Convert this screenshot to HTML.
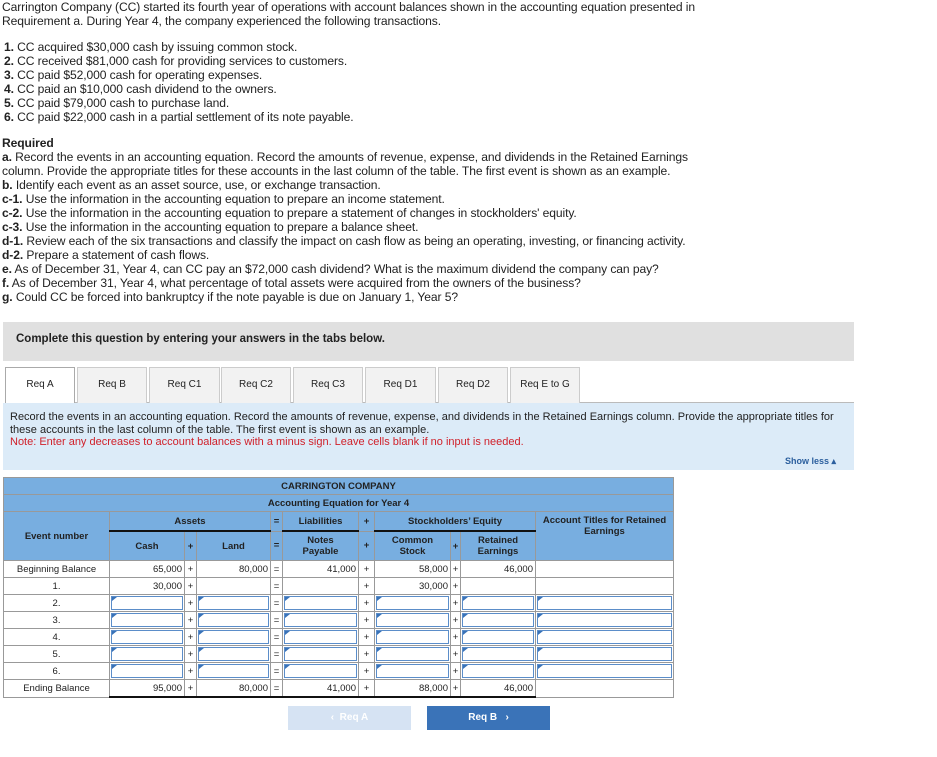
<!DOCTYPE html>
<html><head><meta charset="utf-8"><style>
body{margin:0;width:937px;height:757px;background:#fff;font-family:"Liberation Sans",Arial,sans-serif;color:#222;position:relative;overflow:hidden}
.t{position:absolute;left:2px;font-size:12.1px;line-height:14px;letter-spacing:-0.1px;white-space:nowrap}
b{font-weight:bold}
.gray{position:absolute;left:3px;top:322px;width:851px;height:39px;background:#e0e0e0;font-size:11.5px;font-weight:bold;}
.gray span{position:absolute;left:13px;top:11px}
.tab{position:absolute;top:367px;height:36px;background:#f2f2f2;border:1px solid #ccc;border-bottom:none;box-sizing:border-box;font-size:10px;text-align:center;line-height:34px}
.tabline{position:absolute;left:75px;top:402px;width:779px;height:1px;background:#bbb}
.blue{position:absolute;left:3px;top:403px;width:851px;height:67px;background:#dcebf8;font-size:11px;line-height:12.5px}
table{position:absolute;left:3px;top:477px;border-collapse:collapse;table-layout:fixed;font-size:9.5px}
td{border:1px solid #999;padding:0;text-align:center;height:16px;color:#222}
.h{background:#78aee0}
.r{text-align:right;padding-right:2px}
.in{border:1px solid #999;position:relative}
.in::after{content:"";position:absolute;left:1px;top:1px;right:1px;bottom:1px;border:1px solid #5b8dc9}
.in::before{content:"";position:absolute;left:2px;top:2px;border-left:5px solid #3a73b8;border-bottom:4px solid transparent}
.bb{border-bottom:2px solid #111}
.btn{position:absolute;top:706px;width:123px;height:24px;font-size:10px;font-weight:bold;color:#fff;text-align:center;line-height:24px}
</style></head><body>
<div class="t" style="top:0">Carrington Company (CC) started its fourth year of operations with account balances shown in the accounting equation presented in<br>Requirement a. During Year 4, the company experienced the following transactions.</div>
<div class="t" style="top:40px;left:4px"><b>1.</b> CC acquired $30,000 cash by issuing common stock.<br><b>2.</b> CC received $81,000 cash for providing services to customers.<br><b>3.</b> CC paid $52,000 cash for operating expenses.<br><b>4.</b> CC paid an $10,000 cash dividend to the owners.<br><b>5.</b> CC paid $79,000 cash to purchase land.<br><b>6.</b> CC paid $22,000 cash in a partial settlement of its note payable.</div>
<div class="t" style="top:136px"><b>Required</b><br><b>a.</b> Record the events in an accounting equation. Record the amounts of revenue, expense, and dividends in the Retained Earnings<br>column. Provide the appropriate titles for these accounts in the last column of the table. The first event is shown as an example.<br><b>b.</b> Identify each event as an asset source, use, or exchange transaction.<br><b>c-1.</b> Use the information in the accounting equation to prepare an income statement.<br><b>c-2.</b> Use the information in the accounting equation to prepare a statement of changes in stockholders' equity.<br><b>c-3.</b> Use the information in the accounting equation to prepare a balance sheet.<br><b>d-1.</b> Review each of the six transactions and classify the impact on cash flow as being an operating, investing, or financing activity.<br><b>d-2.</b> Prepare a statement of cash flows.<br><b>e.</b> As of December 31, Year 4, can CC pay an $72,000 cash dividend? What is the maximum dividend the company can pay?<br><b>f.</b> As of December 31, Year 4, what percentage of total assets were acquired from the owners of the business?<br><b>g.</b> Could CC be forced into bankruptcy if the note payable is due on January 1, Year 5?</div>
<div class="gray"><span>Complete this question by entering your answers in the tabs below.</span></div>
<div class="tabline"></div>
<div class="tab" style="left:5px;width:70px;background:#fff;border-color:#aaa">Req A</div>
<div class="tab" style="left:77px;width:70px">Req B</div>
<div class="tab" style="left:149px;width:71px">Req C1</div>
<div class="tab" style="left:221px;width:70px">Req C2</div>
<div class="tab" style="left:293px;width:70px">Req C3</div>
<div class="tab" style="left:365px;width:71px">Req D1</div>
<div class="tab" style="left:438px;width:70px">Req D2</div>
<div class="tab" style="left:510px;width:70px">Req E to G</div>
<div class="blue"><div style="position:absolute;left:7px;top:8px">Record the events in an accounting equation. Record the amounts of revenue, expense, and dividends in the Retained Earnings column. Provide the appropriate titles for<br>these accounts in the last column of the table. The first event is shown as an example.<br><span style="color:#d0202a">Note: Enter any decreases to account balances with a minus sign. Leave cells blank if no input is needed.</span></div>
<div style="position:absolute;right:18px;top:52px;font-size:9px;font-weight:bold;color:#2b5f9e">Show less ▴</div></div>
<table>
<colgroup><col style="width:106px"><col style="width:75px"><col style="width:12px"><col style="width:74px"><col style="width:12px"><col style="width:76px"><col style="width:16px"><col style="width:76px"><col style="width:10px"><col style="width:75px"><col style="width:138px"></colgroup>
<tr class="h"><td colspan="11" style="font-weight:bold">CARRINGTON COMPANY</td></tr>
<tr class="h"><td colspan="11" style="font-weight:bold">Accounting Equation for Year 4</td></tr>
<tr class="h" style="font-weight:bold"><td rowspan="2">Event number</td><td colspan="3" style="border-bottom:2px solid #111;height:18px">Assets</td><td>=</td><td style="border-bottom:2px solid #111">Liabilities</td><td>+</td><td colspan="3" style="border-bottom:2px solid #111">Stockholders’ Equity</td><td rowspan="2" style="vertical-align:top;padding-top:3px">Account Titles for Retained Earnings</td></tr>
<tr class="h" style="font-weight:bold"><td style="height:28px">Cash</td><td>+</td><td>Land</td><td>=</td><td>Notes<br>Payable</td><td>+</td><td>Common<br>Stock</td><td>+</td><td>Retained<br>Earnings</td></tr>
<tr><td>Beginning Balance</td><td class="r">65,000</td><td>+</td><td class="r">80,000</td><td>=</td><td class="r">41,000</td><td>+</td><td class="r">58,000</td><td>+</td><td class="r">46,000</td><td></td></tr>
<tr><td>1.</td><td class="r">30,000</td><td>+</td><td></td><td>=</td><td></td><td>+</td><td class="r">30,000</td><td>+</td><td></td><td></td></tr>
<tr><td>2.</td><td class="in"></td><td>+</td><td class="in"></td><td>=</td><td class="in"></td><td>+</td><td class="in"></td><td>+</td><td class="in"></td><td class="in"></td></tr>
<tr><td>3.</td><td class="in"></td><td>+</td><td class="in"></td><td>=</td><td class="in"></td><td>+</td><td class="in"></td><td>+</td><td class="in"></td><td class="in"></td></tr>
<tr><td>4.</td><td class="in"></td><td>+</td><td class="in"></td><td>=</td><td class="in"></td><td>+</td><td class="in"></td><td>+</td><td class="in"></td><td class="in"></td></tr>
<tr><td>5.</td><td class="in"></td><td>+</td><td class="in"></td><td>=</td><td class="in"></td><td>+</td><td class="in"></td><td>+</td><td class="in"></td><td class="in"></td></tr>
<tr><td>6.</td><td class="in"></td><td>+</td><td class="in"></td><td>=</td><td class="in"></td><td>+</td><td class="in"></td><td>+</td><td class="in"></td><td class="in"></td></tr>
<tr><td>Ending Balance</td><td class="r bb">95,000</td><td class="bb">+</td><td class="r bb">80,000</td><td class="bb">=</td><td class="r bb">41,000</td><td class="bb">+</td><td class="r bb">88,000</td><td class="bb">+</td><td class="r bb">46,000</td><td></td></tr>
</table>
<div class="btn" style="left:288px;background:#d6e3f3;color:#fff">‹&nbsp;&nbsp;Req A</div>
<div class="btn" style="left:427px;background:#3a73b8">Req B&nbsp;&nbsp;&nbsp;›</div>
</body></html>
